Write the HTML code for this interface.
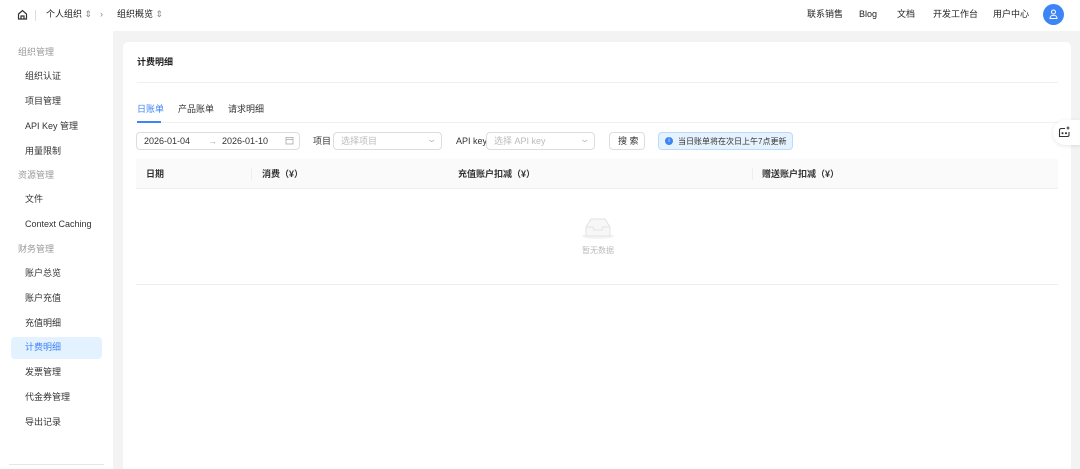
<!DOCTYPE html>
<html><head><meta charset="utf-8"><style>
*{margin:0;padding:0;box-sizing:border-box}
html,body{width:1080px;height:469px;overflow:hidden}
body{background:#f3f3f3;font-family:"Liberation Sans","Noto Sans CJK SC",sans-serif;font-size:9px;color:#333;position:relative}
.a{position:absolute;white-space:nowrap;line-height:11px}
.top{position:absolute;left:0;top:0;width:1080px;height:31px;background:#fff}
.side{position:absolute;left:0;top:31px;width:113px;height:438px;background:#fff}
.card{position:absolute;left:123px;top:42px;width:948px;height:427px;background:#fff;border-radius:5px 5px 0 0}
.g{color:#999;left:18px}
.i{left:25px;color:#333}
.box{position:absolute;border:1px solid #ddd;border-radius:4px;background:#fff;height:18px}
.ph{color:#bbb}
</style></head><body>
<div class="top">
<svg class="a" style="left:17px;top:9px" width="11" height="11" viewBox="0 0 11 11" fill="none" stroke="#333" stroke-width="1.2"><path d="M1.5 5L5.5 1.5 9.5 5V10H1.5Z"/><path d="M4 10V7h3v3"/></svg>
<div class="a" style="left:35px;top:10px;width:1px;height:11px;background:#ddd"></div>
<div class="a" style="left:46px;top:9px;color:#222">个人组织 <span style="color:#888">⇕</span></div>
<div class="a" style="left:100px;top:9px;color:#888">›</div>
<div class="a" style="left:117px;top:9px;color:#222">组织概览 <span style="color:#888">⇕</span></div>
<div class="a" style="left:807px;top:9px;color:#222">联系销售</div>
<div class="a" style="left:859px;top:9px;color:#222">Blog</div>
<div class="a" style="left:897px;top:9px;color:#222">文档</div>
<div class="a" style="left:933px;top:9px;color:#222">开发工作台</div>
<div class="a" style="left:993px;top:9px;color:#222">用户中心</div>
<div class="a" style="left:1043px;top:4px;width:21px;height:21px;border-radius:50%;background:#3d84f7"></div>
<svg class="a" style="left:1049px;top:9px" width="9" height="10" viewBox="0 0 9 10" fill="none" stroke="#fff" stroke-width="1"><circle cx="4.5" cy="3" r="2"/><path d="M1 9.5c0-2 1.5-3.2 3.5-3.2S8 7.5 8 9.5Z"/></svg>
</div>
<div class="side">
<div class="a g" style="top:16px">组织管理</div>
<div class="a i" style="top:40px">组织认证</div>
<div class="a i" style="top:65px">项目管理</div>
<div class="a i" style="top:90px">API Key 管理</div>
<div class="a i" style="top:115px">用量限制</div>
<div class="a g" style="top:139px">资源管理</div>
<div class="a i" style="top:163px">文件</div>
<div class="a i" style="top:188px">Context Caching</div>
<div class="a g" style="top:213px">财务管理</div>
<div class="a i" style="top:237px">账户总览</div>
<div class="a i" style="top:262px">账户充值</div>
<div class="a i" style="top:287px">充值明细</div>
<div class="a" style="left:11px;top:306px;width:91px;height:22px;background:#e4f1ff;border-radius:4px"></div>
<div class="a i" style="top:311px;color:#3d84f7">计费明细</div>
<div class="a i" style="top:336px">发票管理</div>
<div class="a i" style="top:361px">代金券管理</div>
<div class="a i" style="top:386px">导出记录</div>
<div class="a" style="left:9px;top:433px;width:95px;height:1px;background:#e6e6e6"></div>
</div>
<div class="card"></div>
<div class="a" style="left:137px;top:57px;font-weight:bold;color:#222">计费明细</div>
<div class="a" style="left:137px;top:82px;width:921px;height:1px;background:#f0f0f0"></div>
<div class="a" style="left:137px;top:104px;color:#3d84f7">日账单</div>
<div class="a" style="left:178px;top:104px">产品账单</div>
<div class="a" style="left:228px;top:104px">请求明细</div>
<div class="a" style="left:137px;top:122px;width:921px;height:1px;background:#f0f0f0"></div>
<div class="a" style="left:137px;top:121px;width:24px;height:2px;background:#3d84f7"></div>
<div class="box" style="left:136px;top:132px;width:164px"></div>
<div class="a" style="left:144px;top:136px">2026-01-04</div>
<div class="a" style="left:208px;top:136px;color:#aaa">→</div>
<div class="a" style="left:222px;top:136px">2026-01-10</div>
<svg class="a" style="left:285px;top:136px" width="9" height="9" viewBox="0 0 9 9" fill="none" stroke="#aaa" stroke-width=".8"><rect x="1" y="1.5" width="7" height="6.5"/><path d="M1 3.5h7"/></svg>
<div class="a" style="left:313px;top:136px">项目</div>
<div class="box" style="left:333px;top:132px;width:109px"></div>
<div class="a ph" style="left:341px;top:136px">选择项目</div>
<div class="a" style="left:428px;top:134px;color:#bbb;transform:scaleX(1.4)">⌄</div>
<div class="a" style="left:456px;top:136px">API key</div>
<div class="box" style="left:486px;top:132px;width:109px"></div>
<div class="a ph" style="left:494px;top:136px">选择 API key</div>
<div class="a" style="left:581px;top:134px;color:#bbb;transform:scaleX(1.4)">⌄</div>
<div class="box" style="left:609px;top:132px;width:36px"></div>
<div class="a" style="left:618px;top:136px">搜 索</div>
<div class="a" style="left:658px;top:132px;width:135px;height:18px;background:#e6f3ff;border:1px solid #b7dcff;border-radius:4px"></div>
<div class="a" style="left:665px;top:137px;width:8px;height:8px;border-radius:50%;background:#3d84f7;color:#fff;font-size:6px;text-align:center;line-height:8px">i</div>
<div class="a" style="left:678px;top:136px;font-size:8px">当日账单将在次日上午7点更新</div>
<div class="a" style="left:136px;top:159px;width:922px;height:30px;background:#fafafa;border-bottom:1px solid #f0f0f0"></div>
<div class="a" style="left:146px;top:169px;font-weight:bold">日期</div>
<div class="a" style="left:251px;top:168px;width:1px;height:12px;background:#eee"></div>
<div class="a" style="left:262px;top:169px;font-weight:bold">消费（¥）</div>
<div class="a" style="left:458px;top:169px;font-weight:bold">充值账户扣减（¥）</div>
<div class="a" style="left:752px;top:168px;width:1px;height:12px;background:#eee"></div>
<div class="a" style="left:762px;top:169px;font-weight:bold">赠送账户扣减（¥）</div>
<svg class="a" style="left:580px;top:215px" width="36" height="26" viewBox="0 0 36 26"><ellipse cx="18" cy="21" rx="16" ry="3" fill="#f3f3f3"/><path d="M6 12L11 4h14l5 8v9H6Z" fill="#f7f7f7" stroke="#e3e3e3"/><path d="M6 12h7l1 3h8l1-3h7" fill="none" stroke="#e3e3e3"/></svg>
<div class="a" style="left:582px;top:245px;color:#bbb;font-size:8px">暂无数据</div>
<div class="a" style="left:136px;top:284px;width:922px;height:1px;background:#eee"></div>
<div class="a" style="left:1053px;top:120px;width:27px;height:25px;border-radius:12px 0 0 12px;background:#fff;box-shadow:0 1px 4px rgba(0,0,0,.1)"></div>
<svg class="a" style="left:1058px;top:126px" width="13" height="12" viewBox="0 0 13 12" fill="none" stroke="#333" stroke-width="1.1"><path d="M7 2.5H3.5Q1.5 2.5 1.5 4.5V10.5H9.5Q11 10.5 11 9V6"/><circle cx="4.5" cy="7.2" r=".5" fill="#333"/><circle cx="8" cy="7.2" r=".5" fill="#333"/><path d="M10 .5v3M8.5 2h3"/></svg>
</body></html>
